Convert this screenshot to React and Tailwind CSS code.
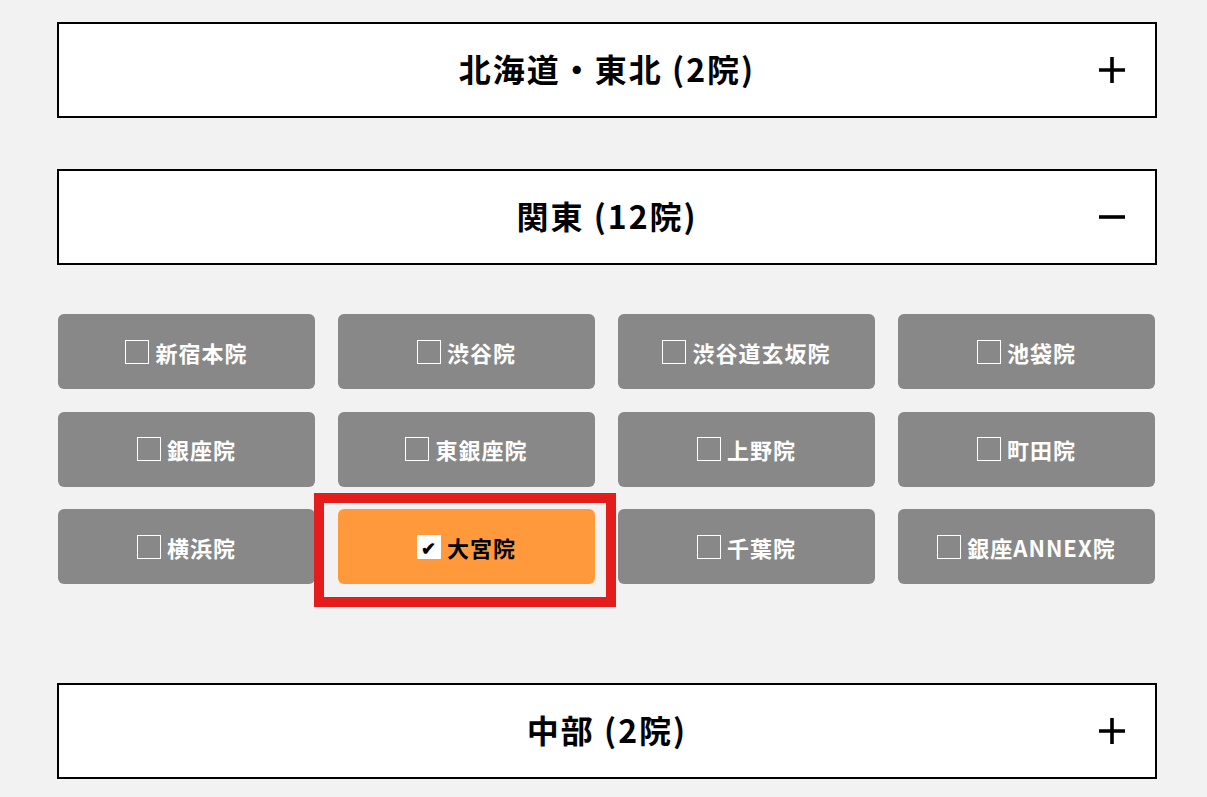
import React from "react";

const font = { fontFamily: '"Noto Sans CJK JP", "Noto Sans", sans-serif' };

function Plus() {
  return (
    <svg width="26" height="26" viewBox="0 0 26 26" className="block">
      <path d="M13 0 V26 M0 13 H26" stroke="#000" strokeWidth="3.6" fill="none" />
    </svg>
  );
}
function Minus() {
  return (
    <svg width="26" height="26" viewBox="0 0 26 26" className="block">
      <path d="M0 13 H26" stroke="#000" strokeWidth="3.6" fill="none" />
    </svg>
  );
}

function Header({ title, open }) {
  return (
    <div className="relative ml-[57px] flex h-[96px] w-[1100px] items-center justify-center border-2 border-black bg-white pb-[5px]">
      <span className="text-[32px] font-bold leading-none tracking-[2px] text-black">{title}</span>
      <div className="absolute right-[30px] top-1/2 -translate-y-1/2">{open ? <Minus /> : <Plus />}</div>
    </div>
  );
}

const clinics = [
  "新宿本院", "渋谷院", "渋谷道玄坂院", "池袋院",
  "銀座院", "東銀座院", "上野院", "町田院",
  "横浜院", "大宮院", "千葉院", "銀座ANNEX院",
];

function Clinic({ name, checked }) {
  if (checked) {
    return (
      <div className="relative">
        <div className="flex h-[75px] items-center justify-center gap-[6px] rounded-[6px] bg-[#ff993c]">
          <span className="flex h-[24px] w-[24px] items-center justify-center bg-white text-[18px] font-bold leading-none text-black">✔</span>
          <span className="text-[22px] font-bold leading-none tracking-[1px] text-black">{name}</span>
        </div>
        <div className="pointer-events-none absolute left-[-24px] top-[-16px] h-[114px] w-[302px] border-[10px] border-[#e41c1c]" />
      </div>
    );
  }
  return (
    <div className="flex h-[75px] items-center justify-center gap-[6px] rounded-[6px] bg-[#888888]">
      <span className="h-[24px] w-[24px] border border-white" />
      <span className="text-[22px] font-bold leading-none tracking-[1px] text-white">{name}</span>
    </div>
  );
}

export default function App() {
  return (
    <div className="min-h-[797px] w-full bg-[#f2f2f2] pt-[22px]" style={font}>
      <Header title="北海道・東北 (2院)" />
      <div className="h-[51px]" />
      <Header title="関東 (12院)" open />
      <div className="ml-[58px] mt-[49px] grid w-[1097px] grid-cols-4 gap-x-[23px] gap-y-[22.5px]">
        {clinics.map((c) => (
          <Clinic key={c} name={c} checked={c === "大宮院"} />
        ))}
      </div>
      <div className="h-[99px]" />
      <Header title="中部 (2院)" />
    </div>
  );
}
